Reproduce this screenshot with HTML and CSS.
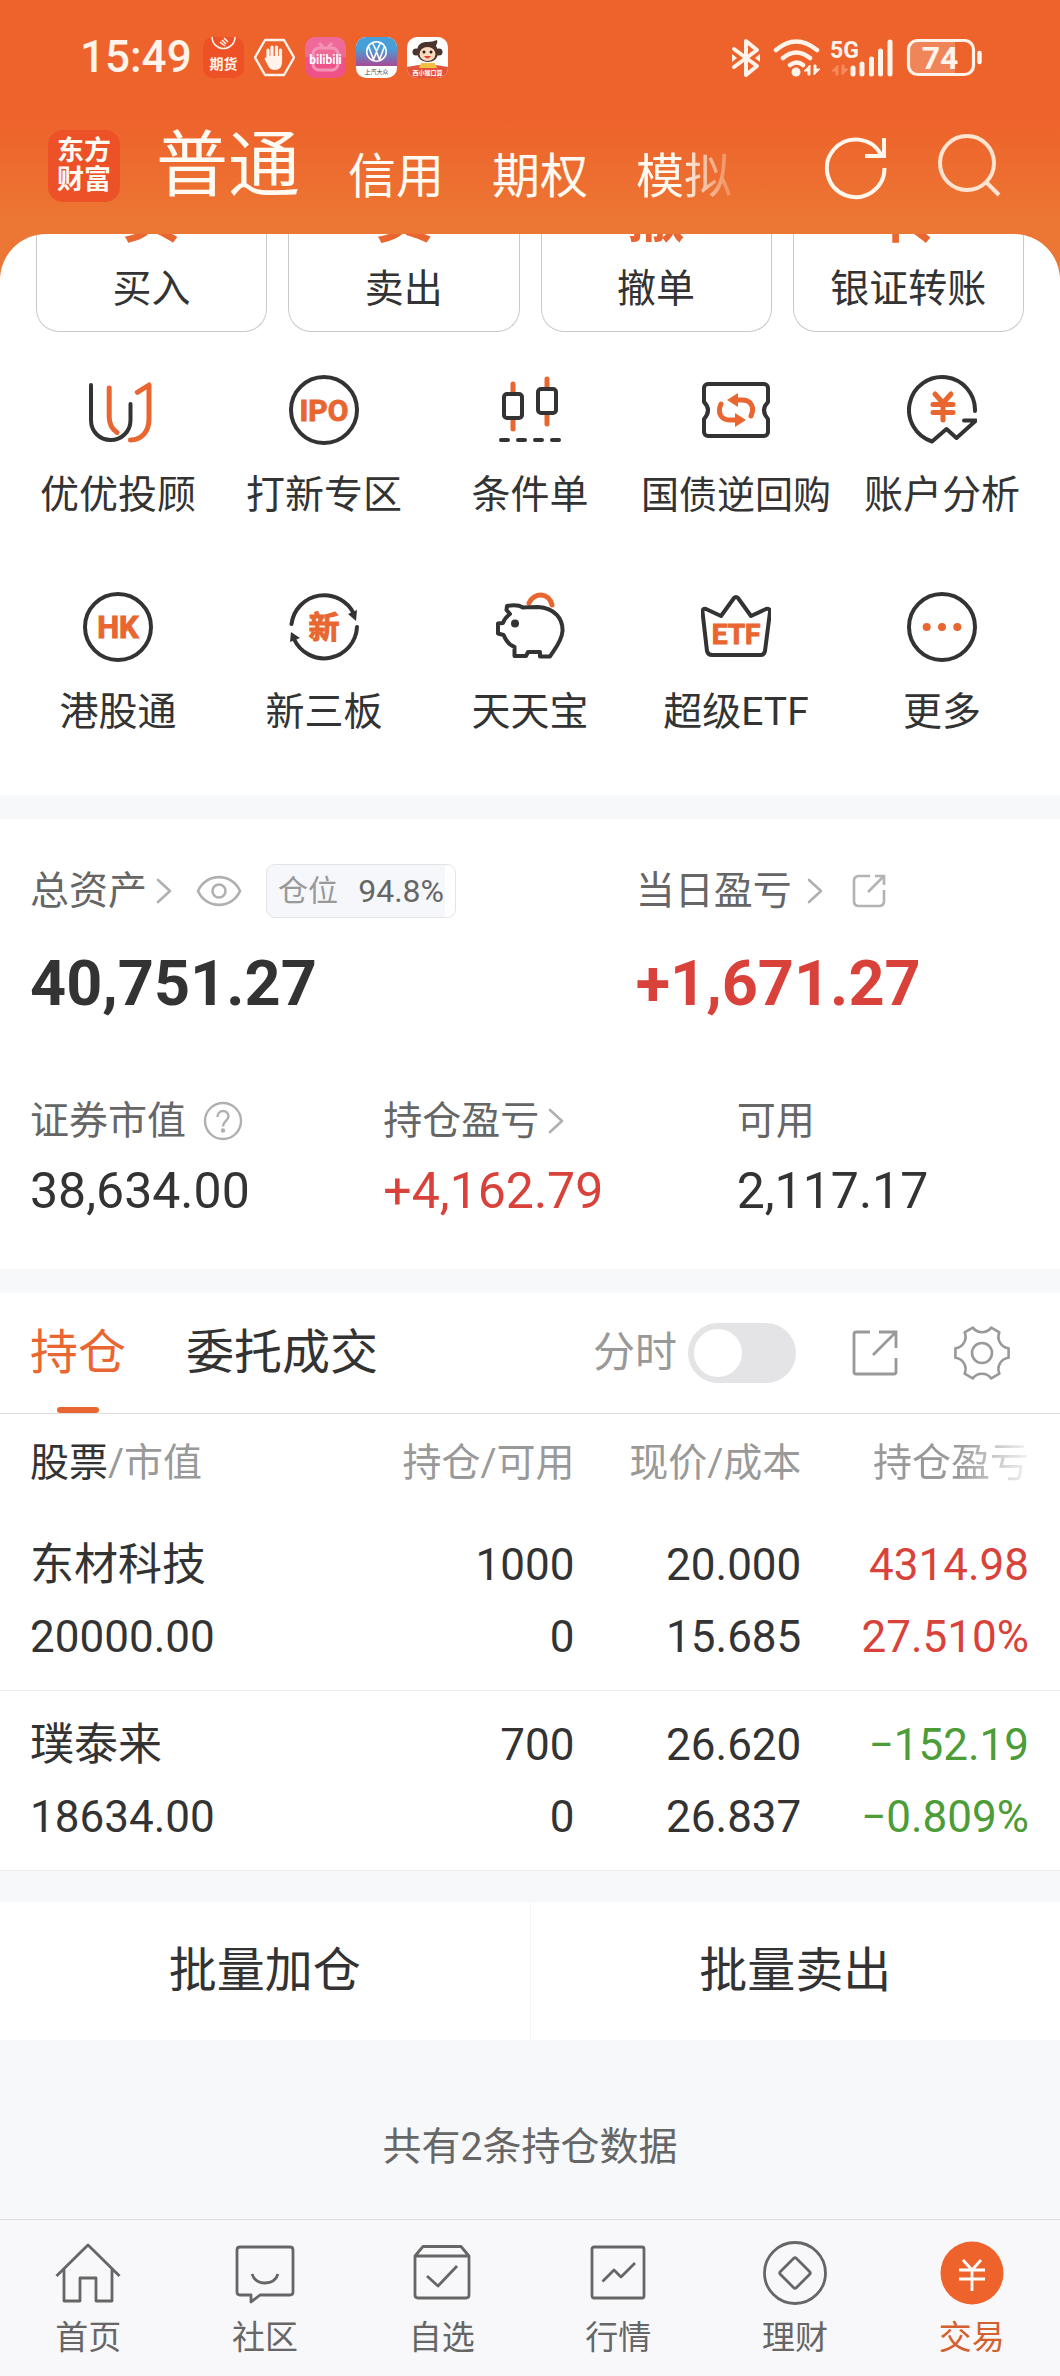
FILE: index.html
```html
<!DOCTYPE html>
<html lang="zh-CN">
<head>
<meta charset="utf-8">
<meta name="viewport" content="width=device-width, initial-scale=1">
<title>交易 - 东方财富</title>
<link rel="stylesheet" href="styles.css">
</head>
<body>
<div class="top">
  <div class="status">
    <span class="clock">15:49</span>
    <div class="notices">
      <svg width="41" height="41" viewBox="0 0 41 41" aria-hidden="true">
        <rect width="41" height="41" rx="10" fill="#ee5126"/>
        <path d="M9 0a11.500 11.500 0 0 0 23 0" fill="none" stroke="#fff3ea" stroke-width="1.600"/>
        <path d="M17 5l5 4M19 3l4 4M21 1l4 4" stroke="#fff3ea" stroke-width="1.600"/>
        <text x="20.500" y="32" text-anchor="middle" class="svg-bold" font-size="14" fill="#fff3ea">期货</text>
      </svg>
      <svg width="41" height="41" viewBox="0 0 41 41" aria-hidden="true">
        <path d="M11 3h19L40 20.500 30 38H11L1 20.500z" fill="none" stroke="#fff3ea" stroke-width="2.400" stroke-linejoin="round"/>
        <path d="M14 22V13M18 20V10M22.500 20V10M26.500 22V13" stroke="#fff3ea" stroke-width="3.200" stroke-linecap="round"/>
        <path d="M12.400 19h15.700v6c0 5-3 8-7 8-5 0-6.500-3-8-6l-2.500-5c0-2 1.500-2 3 0z" fill="#fff3ea"/>
      </svg>
      <svg width="41" height="41" viewBox="0 0 41 41" aria-hidden="true">
        <rect width="41" height="41" rx="10" fill="#ee5288"/>
        <path d="M0 20V10A10 10 0 0 1 10 0h21a10 10 0 0 1 10 10v10z" fill="#ef6a98"/>
        <rect x="8" y="11" width="25" height="22" rx="6" fill="none" stroke="#f394b5" stroke-width="3"/>
        <path d="M14 6l4 4M27 6l-4 4" stroke="#f394b5" stroke-width="3"/>
        <text x="20.500" y="27" text-anchor="middle" class="svg-bold" font-size="12" fill="#fff">bilibili</text>
      </svg>
      <svg width="41" height="41" viewBox="0 0 41 41" aria-hidden="true">
        <defs><linearGradient id="vw" x2="0" y2="1"><stop offset="0.400" stop-color="#479fd9"/><stop offset="1" stop-color="#a84a94"/></linearGradient></defs>
        <rect width="41" height="41" rx="10" fill="#fff"/>
        <path d="M0 29V10A10 10 0 0 1 10 0h21a10 10 0 0 1 10 10v19z" fill="url(#vw)"/>
        <circle cx="20.500" cy="14.500" r="9.800" fill="none" stroke="#fff" stroke-width="1.600"/>
        <path d="M12.500 9.500l5 13 3-7.500 3 7.500 5-13M16.500 6l4 8 4-8" fill="none" stroke="#fff" stroke-width="1.600"/>
        <text x="20.500" y="37" text-anchor="middle" class="svg-cn" font-size="6" fill="#444">上汽大众</text>
      </svg>
      <svg width="41" height="41" viewBox="0 0 41 41" aria-hidden="true">
        <rect width="41" height="41" rx="10" fill="#fff"/>
        <path d="M0 30q20-5 41 0v1a10 10 0 0 1-10 10H10A10 10 0 0 1 0 31z" fill="#e2553a"/>
        <path d="M14 26h14l2 5H12z" fill="#f2c043"/>
        <circle cx="9" cy="15" r="3.500" fill="#4a342d"/><circle cx="32" cy="15" r="3.500" fill="#4a342d"/>
        <path d="M10 15C10 7 15 5 20 5c4 0 7-1 10-2 1 3-1 5-1 6 2 3 2 5 2 7 0 5-4 9-10 9s-11-4-11-10z" fill="#4a342d"/>
        <ellipse cx="20.500" cy="17" rx="8" ry="7" fill="#fbd9bd"/>
        <circle cx="17" cy="15" r="1.500" fill="#222"/><circle cx="24" cy="15" r="1.500" fill="#222"/>
        <path d="M17 19h7q-3.500 5-7 0z" fill="#d9433a"/>
        <text x="20.500" y="38" text-anchor="middle" class="svg-bold" font-size="6" fill="#fff">西小猴口算</text>
      </svg>
    </div>
    <svg class="radio" width="253" height="41" viewBox="0 0 253 41" role="img" aria-label="蓝牙 WiFi 5G 电量 74%">
      <g fill="none" stroke="#fff3ea" stroke-width="4" stroke-linecap="round" stroke-linejoin="round">
        <path d="M3 12l23 17-11 9V4l11 9L3 30"/>
        <path d="M45 13q20-17 41 0M52 21q13-11 27 0M59 28q7-5 13 0" stroke-width="4.500"/>
      </g>
      <path d="M1 17l5 4-5 4zM29 17l-5 4 5 4z" fill="#fff3ea"/>
      <circle cx="65" cy="35" r="4.500" fill="#fff3ea"/>
      <path d="M79 28v10h-2v-4h-4zM83 38V28h2v4h4z" fill="#fff3ea" stroke="#fff3ea" stroke-width="1"/>
      <text x="99" y="21" class="svg-bold" font-size="23" fill="#fff3ea">5G</text>
      <path d="M107 28v10h-2v-4h-4zM111 38V28h2v4h4z" fill="#f58b5c" stroke="#f58b5c" stroke-width="1"/>
      <path d="M122 31v6M131 27v10M140.500 22v15M149.500 14v23M159 5v32" stroke="#fff3ea" stroke-width="5" stroke-linecap="round"/>
      <path d="M186 4h38v33h-38a8 8 0 0 1-8-8V12a8 8 0 0 1 8-8z" fill="#f1855a"/>
      <rect x="177.500" y="3.500" width="65" height="34" rx="9" fill="none" stroke="#fff3ea" stroke-width="3.200"/>
      <path d="M248.500 16v9" stroke="#fff3ea" stroke-width="4.500" stroke-linecap="round"/>
      <text x="209" y="32" text-anchor="middle" class="svg-bold" font-size="32" fill="#fff3ea">74</text>
    </svg>
  </div>

  <header class="titlebar">
    <div class="logo"><span>东方</span><span>财富</span></div>
    <nav class="modes" aria-label="账户类型">
      <a href="#" class="mode mode-on">普通</a>
      <a href="#" class="mode">信用</a>
      <a href="#" class="mode">期权</a>
      <a href="#" class="mode mode-fade">模拟</a>
    </nav>
    <div class="tools">
      <button type="button" aria-label="刷新">
        <svg width="62" height="72" viewBox="0 0 62 72" fill="none" stroke="#fff6ec" stroke-width="4">
          <path d="M59.500 38A28.800 28.800 0 1 1 56 24.500M40 26h19V8"/>
        </svg>
      </button>
      <button type="button" aria-label="搜索">
        <svg width="64" height="72" viewBox="0 0 64 72" fill="none" stroke="#ffe4d2" stroke-width="4">
          <circle cx="29" cy="33" r="27"/><path d="M47 51l14 14"/>
        </svg>
      </button>
    </div>
  </header>

  <section class="sheet">
    <div class="quick">
      <button type="button" class="card"><b>买</b><span>买入</span></button>
      <button type="button" class="card"><b>卖</b><span>卖出</span></button>
      <button type="button" class="card"><b>撤</b><span>撤单</span></button>
      <button type="button" class="card"><b>转</b><span>银证转账</span></button>
    </div>

    <div class="apps">
      <a href="#" class="app">
        <svg class="ic" viewBox="0 0 70 70"><path class="d" d="M8 10V45C8 57 17 65 27.600 65S47.500 57 47.500 45V29"/><path class="o" d="M26.200 13V42C26.200 50 29 54 34 57.500M54.300 17.300L66 10V44C66 57 58 65 47.500 65"/></svg>
        <span>优优投顾</span></a>
      <a href="#" class="app">
        <svg class="ic" viewBox="0 0 70 70"><circle class="d" cx="35" cy="35" r="33"/><text x="35" y="46" text-anchor="middle" class="svg-heavy" font-size="30">IPO</text></svg>
        <span>打新专区</span></a>
      <a href="#" class="app">
        <svg class="ic" viewBox="0 0 70 70"><path class="o" d="M18 9v9M18 45v9M52 4v9M52 40v9"/><rect class="d" x="9" y="19" width="18" height="24" rx="3"/><rect class="d" x="43" y="14" width="18" height="24" rx="3"/><path class="d" d="M6 65h7M23 65h7M40 65h7M57 65h7"/></svg>
        <span>条件单</span></a>
      <a href="#" class="app">
        <svg class="ic" viewBox="0 0 70 70"><path class="d" d="M7 9H63a4 4 0 0 1 4 4V27q-8 8 0 17V57a4 4 0 0 1-4 4H7a4 4 0 0 1-4-4V44q8-9 0-17V13a4 4 0 0 1 4-4z"/><path class="o" d="M50 41C54 32 50 25 41 25H34M20 29C16 38 20 45 29 45H36"/><path class="of" d="M26 25l11-7v14zM45 45l-11-7v14z"/></svg>
        <span class="tight">国债逆回购</span></a>
      <a href="#" class="app">
        <svg class="ic" viewBox="0 0 70 70"><path class="d" d="M68 36A33 33 0 1 0 25 66.500L39.500 54 49.500 63 69 45.500H57"/><path class="o" d="M28 19l8 9 8-9M26 29.500h20M26 37.500h20M36 29v16"/></svg>
        <span>账户分析</span></a>
      <a href="#" class="app">
        <svg class="ic" viewBox="0 0 70 70"><circle class="d" cx="35" cy="35" r="33"/><text x="35" y="46" text-anchor="middle" class="svg-heavy" font-size="31">HK</text></svg>
        <span>港股通</span></a>
      <a href="#" class="app">
        <svg class="ic" viewBox="0 0 70 70"><path class="d" d="M2.500 32A33 33 0 0 1 65 22M68 35A33 33 0 0 1 5 47"/><path class="df" d="M59 22l9-4-1 11zM11 46l-9-6-1 10z"/><text x="35" y="46" text-anchor="middle" class="svg-heavy" font-size="31">新</text></svg>
        <span>新三板</span></a>
      <a href="#" class="app">
        <svg class="ic" viewBox="0 0 70 70"><path class="o" d="M34 11C39 0 54 0 57 13"/><path class="d" d="M12 14C18 13 24 13 28 15.500 33 15 37 15 43 15 60 16 68 27 67.500 39 67 49 59 58 55 64.500H45V60H33L31 64H19.500V55C14 53 11 49 8.600 43L3 41.500V31.500L8 31C9 27 11 25 15 22L11.500 18z"/><circle cx="20" cy="31.500" r="4" fill="#333"/></svg>
        <span>天天宝</span></a>
      <a href="#" class="app">
        <svg class="ic" viewBox="0 0 70 70"><path class="d" d="M5 17l15 7L33 6q2-2 4 0L50 24l15-7q4-1 4 3L64 59q-1 4-4 4H11q-4 0-5-4L1.500 20q0-4 3.500-3z"/><text x="35" y="52" text-anchor="middle" class="svg-heavy" font-size="28">ETF</text></svg>
        <span>超级ETF</span></a>
      <a href="#" class="app">
        <svg class="ic" viewBox="0 0 70 70"><circle class="d" cx="35" cy="35" r="33"/><g class="of"><circle cx="19.700" cy="35" r="4"/><circle cx="35" cy="35" r="4"/><circle cx="50.300" cy="35" r="4"/></g></svg>
        <span>更多</span></a>
    </div>
  </section>
</div>

<main class="main">
  <section class="assets">
    <div class="totals">
      <div class="cell">
        <div class="label label-tall">
          <a href="#">总资产</a>
          <svg class="chev" width="16" height="26" viewBox="0 0 16 26"><path d="M2 2l12 11L2 24"/></svg>
          <button type="button" class="eye" aria-label="隐藏金额"><svg width="46" height="34" viewBox="0 0 46 34" fill="none" stroke="#b0b0b0" stroke-width="2.600"><path d="M2 17C10 -1.500 36 -1.500 44 17 36 35.500 10 35.500 2 17z"/><circle cx="23" cy="17" r="6.500"/></svg></button>
          <span class="badge"><span>仓位</span><em>94.8%</em></span>
        </div>
        <div class="big">40,751.27</div>
      </div>
      <div class="cell">
        <div class="label label-tall">
          <a href="#">当日盈亏</a>
          <svg class="chev chev-far" width="16" height="26" viewBox="0 0 16 26"><path d="M2 2l12 11L2 24"/></svg>
          <button type="button" class="share" aria-label="分享"><svg width="34" height="34" viewBox="0 0 34 34" fill="none" stroke="#b3b3b3" stroke-width="2.600"><path d="M18 2H7Q2 2 2 7V27Q2 32 7 32H27Q32 32 32 27V16M23 2h9v9M32 2L16 18"/></svg></button>
        </div>
        <div class="big up">+1,671.27</div>
      </div>
    </div>
    <div class="details">
      <div class="cell">
        <div class="label"><span>证券市值</span>
          <button type="button" class="help" aria-label="说明"><svg width="40" height="40" viewBox="0 0 40 40" fill="none" stroke="#b0b0b0" stroke-width="2.400"><circle cx="20" cy="20" r="18"/><path d="M14.500 16C14.500 8 25.500 8 25.500 15.500 25.500 19.500 20 20 20 25.500"/><circle cx="20" cy="29.500" r="1" fill="#b0b0b0"/></svg></button></div>
        <div class="mid">38,634.00</div>
      </div>
      <div class="cell">
        <div class="label"><a href="#">持仓盈亏</a><svg class="chev" width="16" height="26" viewBox="0 0 16 26"><path d="M2 2l12 11L2 24"/></svg></div>
        <div class="mid up">+4,162.79</div>
      </div>
      <div class="cell">
        <div class="label"><span>可用</span></div>
        <div class="mid">2,117.17</div>
      </div>
    </div>
  </section>

  <section class="holdings">
    <div class="tabs">
      <a href="#" class="tab tab-on">持仓</a>
      <a href="#" class="tab">委托成交</a>
      <div class="tab-tools">
        <label class="switch">分时<input type="checkbox"></label>
        <button type="button" aria-label="导出"><svg width="46" height="46" viewBox="0 0 46 46" fill="none" stroke="#999" stroke-width="2.800"><path d="M18 2H4Q2 2 2 4V42Q2 44 4 44H42Q44 44 44 42V28M27 2h17v16M44 2L21 25"/></svg></button>
        <button type="button" aria-label="设置"><svg width="56" height="56" viewBox="0 0 56 56" fill="none" stroke="#999" stroke-width="2.600" stroke-linejoin="round"><path d="M54.600 32.700A11.500 11.500 0 0 0 45.400 48.700L37.200 53.400A11.500 11.500 0 0 0 18.800 53.400L10.600 48.700A11.500 11.500 0 0 0 1.400 32.700V23.300A11.500 11.500 0 0 0 10.600 7.300L18.800 2.600A11.500 11.500 0 0 0 37.200 2.600L45.400 7.300A11.500 11.500 0 0 0 54.600 23.300z"/><circle cx="28" cy="28" r="10"/></svg></button>
      </div>
    </div>
    <table class="stocks">
      <thead>
        <tr><th scope="col" class="c1"><b>股票</b>/市值</th><th scope="col" class="c2">持仓/可用</th><th scope="col" class="c3">现价/成本</th><th scope="col" class="c4"><span class="fade">持仓盈亏</span></th></tr>
      </thead>
      <tbody>
        <tr><td><div>东材科技</div><div>20000.00</div></td><td><div>1000</div><div>0</div></td><td><div>20.000</div><div>15.685</div></td><td class="up"><div>4314.98</div><div>27.510%</div></td></tr>
        <tr><td><div>璞泰来</div><div>18634.00</div></td><td><div>700</div><div>0</div></td><td><div>26.620</div><div>26.837</div></td><td class="down"><div>−152.19</div><div>−0.809%</div></td></tr>
      </tbody>
    </table>
  </section>

  <div class="batch">
    <button type="button">批量加仓</button>
    <button type="button">批量卖出</button>
  </div>
  <p class="count">共有2条持仓数据</p>
</main>

<nav class="dock" aria-label="主导航">
  <a href="#"><svg viewBox="0 0 66 66"><path d="M1.500 36L33 5l31.500 31M9 29V61H25V38H41V61H57V29"/></svg>首页</a>
  <a href="#"><svg viewBox="0 0 66 66"><path d="M8 7H58q3 0 3 3V52q0 3-3 3H28L19 62V55H8q-3 0-3-3V10q0-3 3-3zM20 34q3 9 13 9t13-9"/></svg>社区</a>
  <a href="#"><svg viewBox="0 0 66 66"><path d="M6 16L14 6.500H52L60 16V55q0 3-3 3H9q-3 0-3-3zM6 16H60M18 36l11 10 19-20"/></svg>自选</a>
  <a href="#"><svg viewBox="0 0 66 66"><rect x="7" y="7" width="52" height="51" rx="2"/><path d="M17.500 41.500L29 30l7 7 14-14"/></svg>行情</a>
  <a href="#"><svg viewBox="0 0 66 66"><circle cx="33" cy="33" r="30.500"/><path d="M31.500 18.500q1.500-1.500 3 0L47.500 31.500q1.500 1.500 0 3L34.500 47.500q-1.500 1.500-3 0L18.500 34.500q-1.500-1.500 0-3z"/></svg>理财</a>
  <a href="#" class="dock-on"><svg viewBox="0 0 66 66"><circle cx="33" cy="33" r="31.500" fill="#ee622b" stroke="none"/><path stroke="#fff" d="M24 20l9 10 9-10M20 30h26M20 39h26M33 30v21"/></svg>交易</a>
</nav>
</body>
</html>
```
FILE: styles.css
```css
* { box-sizing: border-box; }

body {
  margin: 0;
  min-height: 100vh;
  display: flex;
  flex-direction: column;
  background: #f7f8fa;
  color: #333;
  font-family: Roboto, "Noto Sans CJK SC", sans-serif;
  font-size: 39px;
  line-height: 50px;
}

a { color: inherit; text-decoration: none; }
button { margin: 0; padding: 0; border: 0; background: none; color: inherit; font: inherit; }
svg { display: block; flex: none; }

.svg-bold { font-family: Roboto, "Noto Sans CJK SC", sans-serif; font-weight: 700; }
.svg-cn { font-family: "Noto Sans CJK SC", sans-serif; }
.svg-heavy { font-family: Roboto, "Noto Sans CJK SC", sans-serif; font-weight: 700; fill: #e96630; stroke: #e96630; stroke-width: 1; }

/* Orange header */
.top { background: linear-gradient(#ee622b 0, #ee622b 115px, #ec7734 225px, #ec7734 100%); }

.status {
  display: flex;
  align-items: center;
  padding: 37px 76px 0 80px;
}
.clock {
  flex: none;
  width: 123px;
  color: #fff3ea;
  font-size: 44px;
  font-weight: 500;
  line-height: 41px;
}
.notices { display: flex; gap: 10px; }
.radio { margin-left: auto; }

.titlebar {
  display: flex;
  padding: 52px 58px 32px 48px;
  color: #fffaf2;
}
.logo {
  flex: none;
  display: flex;
  flex-direction: column;
  justify-content: center;
  align-items: center;
  width: 72px;
  height: 72px;
  margin-right: 36px;
  border-radius: 15px;
  background: #ed5127;
  font-size: 27px;
  font-weight: 700;
  line-height: 29px;
}
.modes { display: flex; align-items: flex-end; gap: 48px; }
.mode { font-size: 48px; line-height: 50px; white-space: nowrap; }
.mode-on { font-size: 72px; line-height: 72px; }
.mode-fade {
  -webkit-mask-image: linear-gradient(to right, #000 45%, rgba(0, 0, 0, .2));
  mask-image: linear-gradient(to right, #000 45%, rgba(0, 0, 0, .2));
}
.tools { display: flex; gap: 51px; margin-left: auto; }

/* Shortcuts */
.sheet {
  overflow: hidden;
  border-radius: 46px 46px 0 0;
  background: #fff;
}
.quick {
  display: grid;
  grid-template-columns: repeat(4, 1fr);
  gap: 21px;
  padding: 0 36px;
}
.card {
  display: flex;
  flex-direction: column;
  align-items: center;
  gap: 18px;
  padding-bottom: 17px;
  border: 1px solid #c9c9c9;
  border-top: 0;
  border-radius: 0 0 23px 23px;
}
.card b {
  margin-top: -46px;
  color: #e96630;
  font-size: 58px;
  line-height: 58px;
}
.apps {
  display: grid;
  grid-template-columns: repeat(5, 1fr);
  row-gap: 72px;
  padding: 43px 15px 58px;
}
.app {
  display: flex;
  flex-direction: column;
  align-items: center;
  gap: 25px;
  white-space: nowrap;
}
.tight { font-size: 38px; }
.ic { width: 70px; height: 70px; }
.ic .d, .ic .o { fill: none; stroke: #333; stroke-width: 4; stroke-linecap: round; stroke-linejoin: round; }
.ic .o { stroke: #e96630; stroke-width: 5; }
.ic .of { fill: #e96630; }
.ic .df { fill: #333; }

/* Assets */
.main { flex: 1; }
.assets { margin-top: 24px; padding: 45px 0 48px; background: #fff; }
.totals { display: grid; grid-template-columns: 4fr 3fr; }
.details { display: grid; grid-template-columns: repeat(3, 1fr); margin-top: 76px; }
.cell { padding-left: 30px; }
.label { display: flex; align-items: center; height: 50px; color: #666; white-space: nowrap; }
.label-tall { height: 54px; }
.chev { margin-left: 9px; fill: none; stroke: #b0b0b0; stroke-width: 2.6; stroke-linecap: round; stroke-linejoin: round; }
.chev-far { margin-left: 15px; }
.eye { margin-left: 24px; }
.share { margin-left: 29px; }
.help { margin-left: 17px; }
.badge {
  display: flex;
  align-items: center;
  justify-content: space-between;
  width: 190px;
  height: 54px;
  margin-left: 24px;
  padding: 0 11px;
  border: 1px solid #e3e3e5;
  border-radius: 9px;
  background: linear-gradient(to right, #f6f7fa 94.8%, #fff 94.8%);
  color: #999;
  font-size: 30px;
}
.badge em { color: #666; font-style: normal; font-size: 32px; }
.big { margin-top: 30px; font-size: 63px; font-weight: 700; line-height: 72px; }
.mid { margin-top: 15px; font-size: 50px; line-height: 60px; }
.up { color: #d9423a; }
.down { color: #4c9c37; }

/* Holdings */
.holdings { margin-top: 24px; background: #fff; }
.tabs {
  display: flex;
  align-items: center;
  gap: 60px;
  height: 121px;
  padding: 0 50px 0 30px;
  border-bottom: 1px solid #dedede;
}
.tab { position: relative; font-size: 48px; line-height: 120px; white-space: nowrap; }
.tab-on { color: #e96630; }
.tab-on::after {
  content: "";
  position: absolute;
  left: calc(50% - 21px);
  bottom: 0;
  width: 42px;
  height: 6px;
  border-radius: 3px;
  background: #e96630;
}
.tab-tools { display: flex; align-items: center; gap: 56px; margin-left: auto; }
.switch { display: flex; align-items: center; gap: 11px; color: #999; font-size: 42px; white-space: nowrap; }
.switch input {
  appearance: none;
  display: flex;
  align-items: center;
  width: 108px;
  height: 60px;
  margin: 0;
  padding: 6px;
  border-radius: 30px;
  background: #e4e4e6;
}
.switch input::before { content: ""; width: 48px; height: 48px; border-radius: 50%; background: #fff; }
.switch input:checked { justify-content: flex-end; background: #e96630; }

.stocks { width: 100%; border-collapse: separate; border-spacing: 0; table-layout: fixed; }
.stocks th, .stocks td { padding: 0; text-align: right; font-weight: 400; white-space: nowrap; }
.stocks th { height: 97px; padding-top: 1px; color: #999; }
.stocks th b { color: #333; font-weight: 400; }
.stocks td { padding: 18px 0 17px; border-bottom: 1px solid #ececec; font-size: 44px; line-height: 72px; }
.stocks th:first-child, .stocks td:first-child { padding-left: 30px; text-align: left; }
.stocks th:last-child, .stocks td:last-child { padding-right: 31px; }
.c1 { width: 33.2%; }
.c2 { width: 21%; }
.c3 { width: 21.4%; }
.c4 { width: 24.4%; }
.fade {
  -webkit-mask-image: linear-gradient(to right, #000 55%, rgba(0, 0, 0, .1));
  mask-image: linear-gradient(to right, #000 55%, rgba(0, 0, 0, .1));
}

.batch { display: flex; margin-top: 31px; background: #fff; }
.batch button { flex: 1; font-size: 48px; line-height: 138px; }
.batch button + button { border-left: 1px solid #f4f5f7; }
.count { margin: 0; padding: 82px 0 45px; color: #666; text-align: center; }

/* Bottom navigation */
.dock {
  display: grid;
  grid-template-columns: repeat(6, 1fr);
  padding: 20px 0 16px;
  border-top: 1px solid #dfdfe1;
  background: #f8f8fa;
  color: #666;
  font-size: 33px;
  line-height: 44px;
}
.dock a { display: flex; flex-direction: column; align-items: center; gap: 10px; }
.dock svg { width: 66px; height: 66px; fill: none; stroke: #666; stroke-width: 2.8; stroke-linejoin: round; }
.dock-on { color: #d4602f; }
```
